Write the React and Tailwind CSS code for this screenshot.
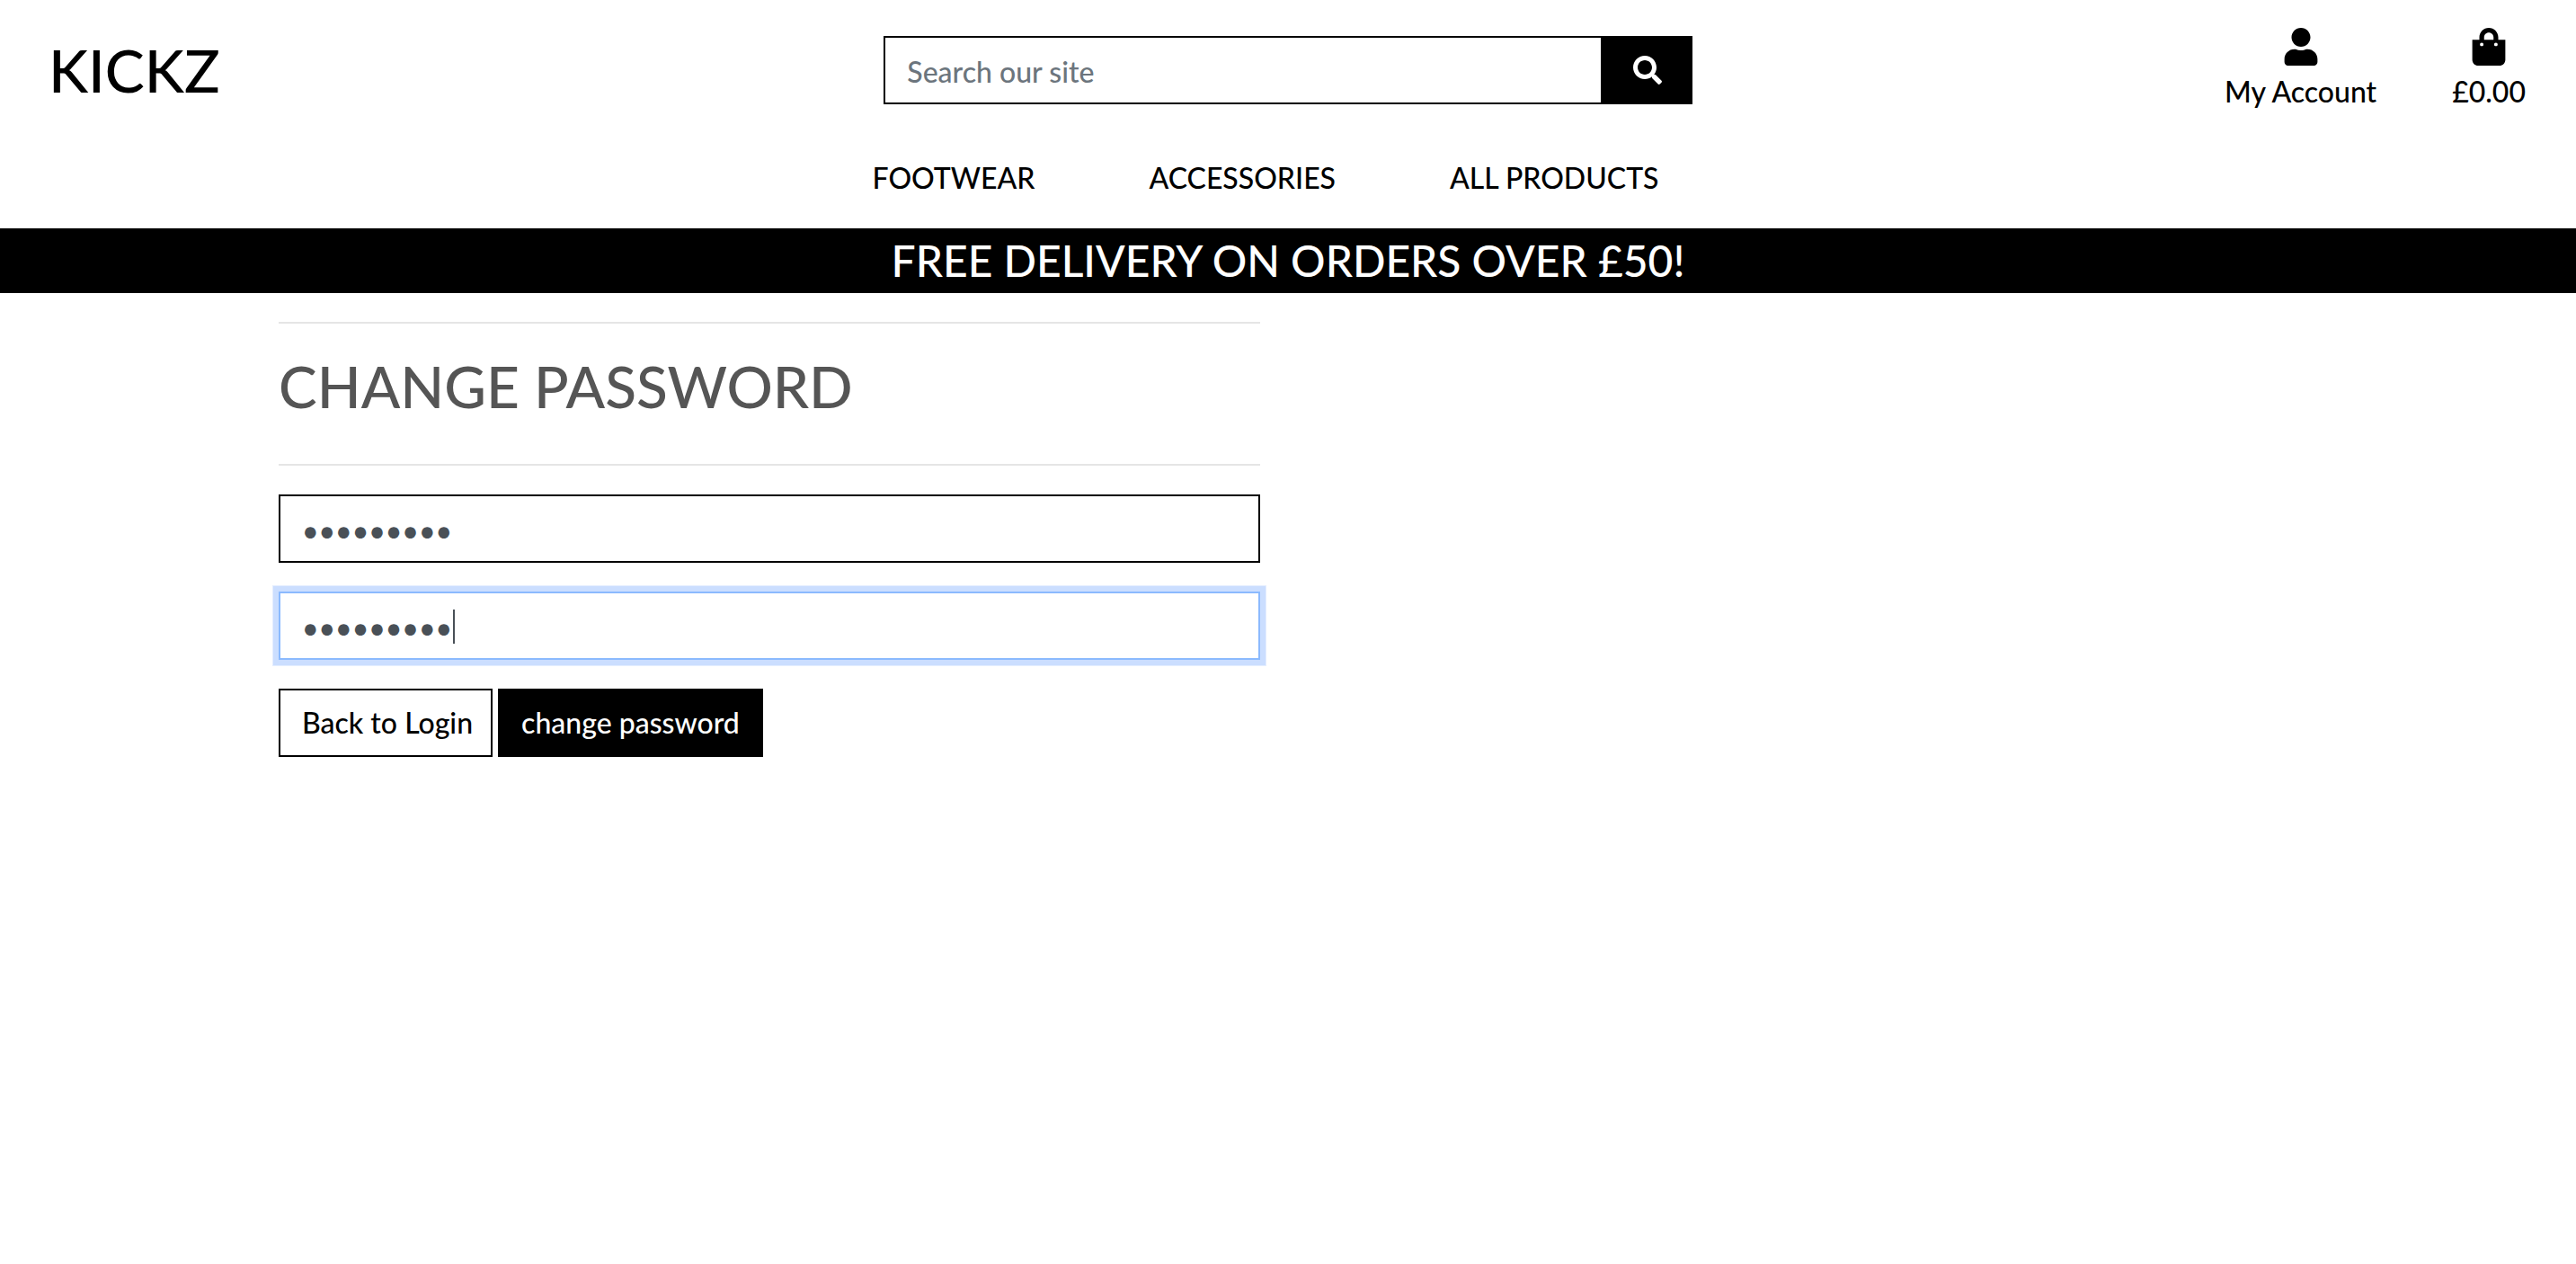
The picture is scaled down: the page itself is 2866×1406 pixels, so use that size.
import { FaSearch, FaShoppingBag, FaUser } from "react-icons/fa";

const navLinks = ["FOOTWEAR", "ACCESSORIES", "ALL PRODUCTS"];

const fieldClass =
  "block h-[76px] w-full rounded-none border-2 bg-white px-6 pt-0.5 text-[32px] text-[#495057] caret-transparent outline-none";

function Header() {
  return (
    <header>
      <div className="grid grid-cols-3 items-start">
        <a href="#home" className="pt-10 pl-[54px] text-[66px] leading-[76px]">
          KICKZ
        </a>
        <form className="flex px-7 pt-10" role="search">
          <input
            type="search"
            aria-label="Search our site"
            placeholder="Search our site"
            className="h-[76px] min-w-0 flex-1 rounded-none border-2 border-black bg-white px-6 pt-0.5 text-[32px] outline-none placeholder:text-[#6c757d]"
          />
          <button
            type="submit"
            aria-label="Search"
            className="flex h-[76px] w-[100px] items-center justify-center bg-black text-[32px] text-white"
          >
            <FaSearch />
          </button>
        </form>
        <div className="flex justify-end gap-[84px] pt-[31px] pr-14 text-[32px] leading-[48px]">
          <a href="#account" className="flex flex-col items-center gap-[5px]">
            <FaUser className="size-[42px]" />
            My Account
          </a>
          <a href="#bag" className="flex flex-col items-center gap-[5px]">
            <FaShoppingBag className="size-[42px]" />
            £0.00
          </a>
        </div>
      </div>
      <nav className="flex justify-center gap-[127px] pt-12 pr-[50px] pb-8 text-[32px] leading-[48px]">
        {navLinks.map((label) => (
          <a key={label} href="#products">
            {label}
          </a>
        ))}
      </nav>
    </header>
  );
}

export default function App() {
  return (
    <div className="min-h-screen bg-white font-['Lato',sans-serif] font-medium text-black">
      <Header />
      <p className="bg-black text-center text-[48px] leading-[72px] text-white">
        FREE DELIVERY ON ORDERS OVER £50!
      </p>
      <main className="mx-auto grid max-w-[2246px] grid-cols-2 gap-[62px] pt-8">
        <section>
          <h1 className="border-y-2 border-[#e5e5e5] pt-8 pb-12 text-[64px] leading-[76px] text-[#555]">
            CHANGE PASSWORD
          </h1>
          <form className="mt-8 flex flex-col gap-8">
            <input
              type="password"
              aria-label="New password"
              defaultValue="password1"
              className={`${fieldClass} border-black`}
            />
            <div className="relative">
              <input
                type="password"
                aria-label="Confirm new password"
                defaultValue="password1"
                className={`${fieldClass} border-[#8bbafe] shadow-[0_0_0_6px_#cbdeff,0_0_0_7px_#e5eeff]`}
              />
              <span className="absolute top-5 left-[194px] h-[38px] w-0.5 bg-[#495057]" />
            </div>
            <div className="flex gap-1.5 text-[32px]">
              <a
                href="#login"
                className="flex h-[76px] items-center border-2 border-black pr-5 pl-6"
              >
                Back to Login
              </a>
              <button
                type="submit"
                className="flex h-[76px] items-center border-2 border-black bg-black px-6 text-white"
              >
                change password
              </button>
            </div>
          </form>
        </section>
      </main>
    </div>
  );
}
